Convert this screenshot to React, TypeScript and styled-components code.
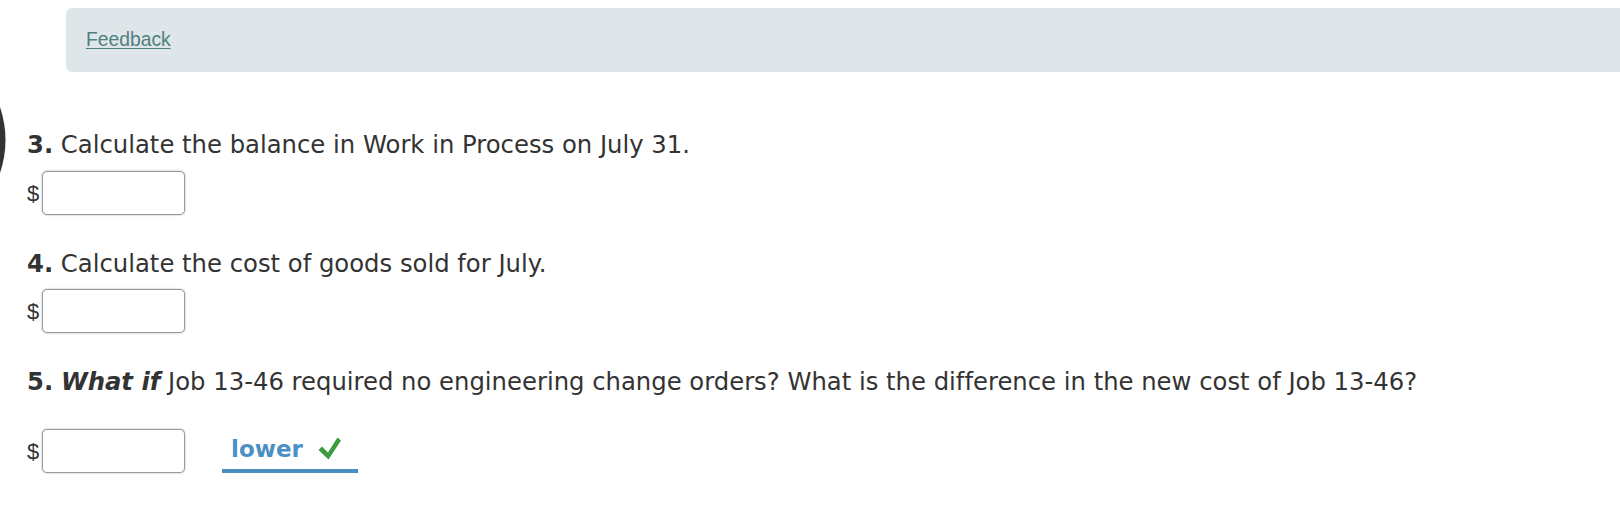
import React from "react";
import styled, { createGlobalStyle } from "styled-components";

const Global = createGlobalStyle`
  html, body { margin: 0; padding: 0; background: #fff; }
  body { width: 1620px; height: 508px; overflow: hidden; }
`;

const Page = styled.div`
  position: relative;
  padding: 8px 0 0 27px;
  font-family: "DejaVu Sans", Verdana, sans-serif;
  font-variant-ligatures: none;
  color: #333;
`;

const Marker = styled.svg`
  position: absolute;
  left: 0;
  top: 107px;
`;

const FeedbackBar = styled.div`
  margin-left: 39px;
  height: 64px;
  background: #dfe6e9;
  border-radius: 6px 0 0 6px;
  display: flex;
  align-items: center;
  padding-left: 20px;
`;

const FeedbackLink = styled.a`
  font-family: "Liberation Sans", Arial, sans-serif;
  font-size: 19.3px;
  color: #4f7f80;
  text-decoration: underline;
  text-underline-offset: 2px;
  cursor: pointer;
`;

const Question = styled.div<{ $top: number }>`
  margin-top: ${(p) => p.$top}px;
  font-size: 24.3px;
  line-height: 28px;
  white-space: nowrap;
`;

const Num = styled.b`
  font-weight: bold;
`;

const AnswerRow = styled.div<{ $top: number }>`
  margin-top: ${(p) => p.$top}px;
  display: flex;
  align-items: center;
  height: 44px;
`;

const Dollar = styled.span`
  font-family: "Liberation Sans", Arial, sans-serif;
  font-size: 22px;
  width: 15px;
  line-height: 24px;
  padding-top: 2px;
`;

const Input = styled.input`
  box-sizing: border-box;
  width: 143px;
  height: 44px;
  border: 1px solid #9a9a9a;
  border-radius: 5px;
  box-shadow: 0 0 2px rgba(0, 0, 0, 0.35);
  background: #fff;
  font-size: 18px;
  padding: 0 6px;
  outline: none;
`;

const Choice = styled.div`
  margin-left: 37px;
  width: 136px;
  height: 44px;
  box-sizing: border-box;
  border-bottom: 4px solid #4a8fc4;
  display: flex;
  align-items: flex-end;
  padding: 0 0 8px 9px;
  gap: 14px;
`;

const ChoiceText = styled.span`
  font-size: 23px;
  font-weight: bold;
  line-height: 24px;
  color: #4a90c6;
`;

const Check = () => (
  <svg width="24" height="24" viewBox="0 0 24 24" style={{ marginBottom: 1 }}>
    <path
      d="M1.5 14 L5 10.5 L11 16.5 L20.5 1.5 L24 4.5 L11.5 23.5 Z"
      fill="#3a9c3e"
    />
  </svg>
);

export default function App() {
  return (
    <>
      <Global />
      <Page>
        <Marker width="7" height="66" viewBox="0 0 7 66">
          <path d="M0 0 Q11 33 0 66 Z" fill="#333" />
        </Marker>
        <FeedbackBar>
          <FeedbackLink>Feedback</FeedbackLink>
        </FeedbackBar>
        <Question $top={59}>
          <Num>3.</Num> Calculate the balance in Work in Process on July 31.
        </Question>
        <AnswerRow $top={12}>
          <Dollar>$</Dollar>
          <Input type="text" />
        </AnswerRow>
        <Question $top={35}>
          <Num>4.</Num> Calculate the cost of goods sold for July.
        </Question>
        <AnswerRow $top={11}>
          <Dollar>$</Dollar>
          <Input type="text" />
        </AnswerRow>
        <Question $top={35}>
          <Num>5.</Num>{" "}
          <b>
            <i>What if</i>
          </b>{" "}
          Job 13-46 required no engineering change orders? What is the
          difference in the new cost of Job 13-46?
        </Question>
        <AnswerRow $top={33}>
          <Dollar>$</Dollar>
          <Input type="text" />
          <Choice>
            <ChoiceText>lower</ChoiceText>
            <Check />
          </Choice>
        </AnswerRow>
      </Page>
    </>
  );
}
